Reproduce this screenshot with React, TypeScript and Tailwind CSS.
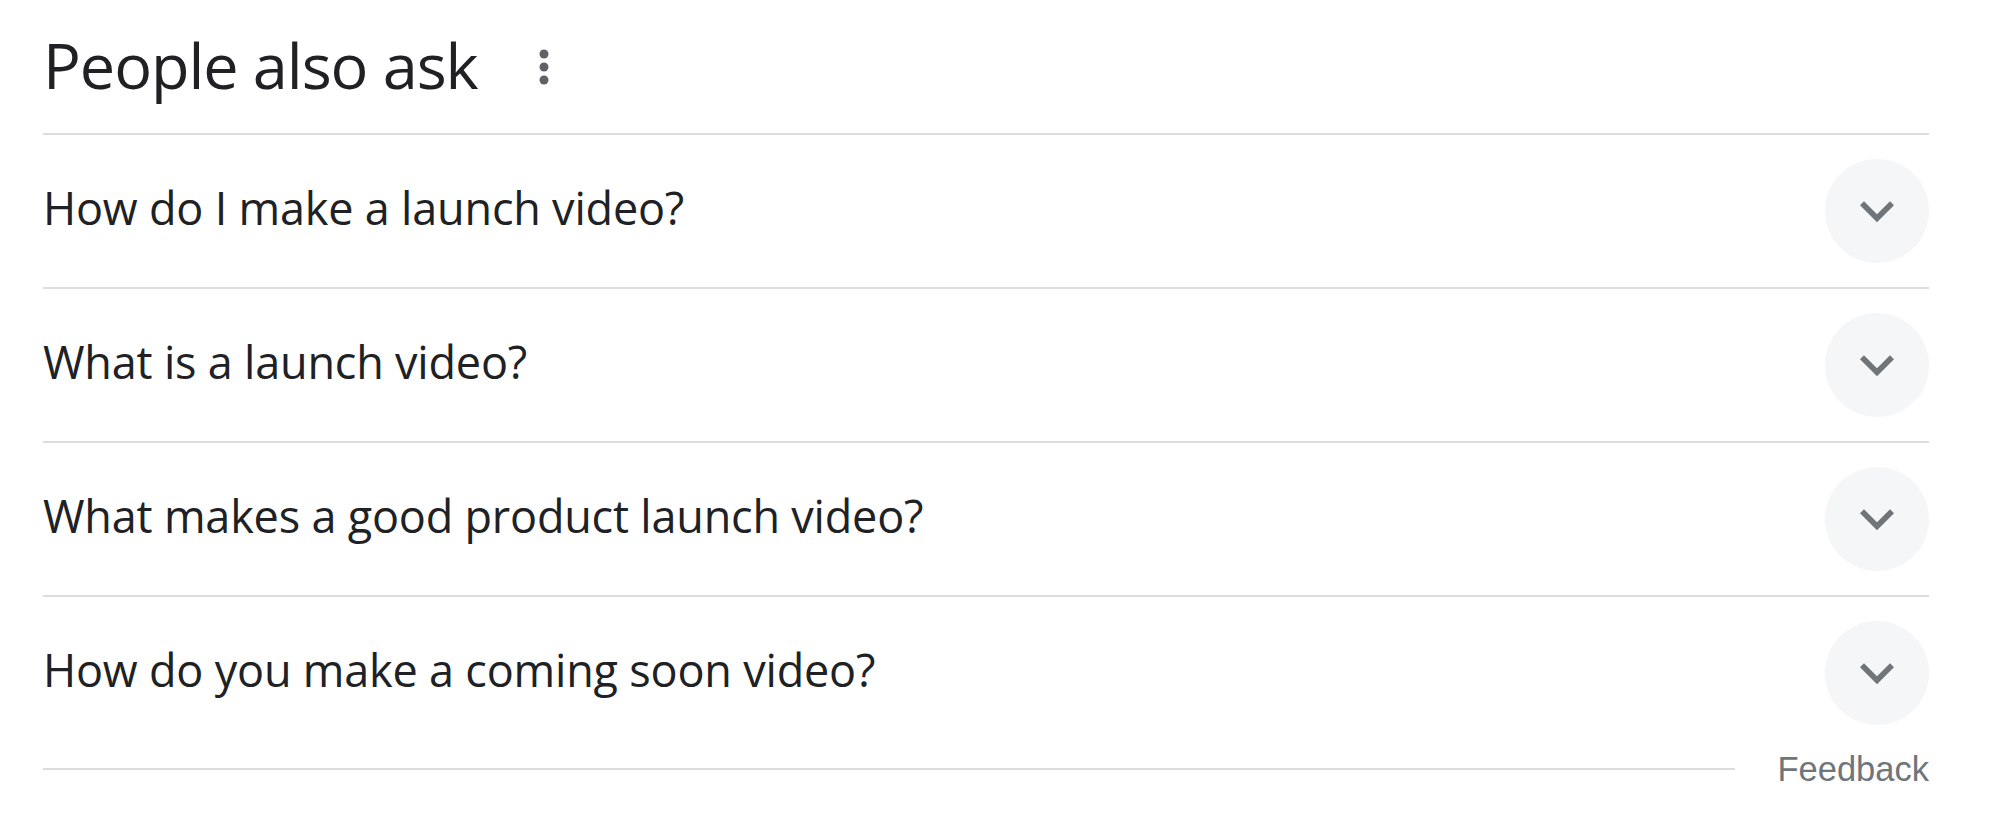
import React from "react";

const questions = [
  "How do I make a launch video?",
  "What is a launch video?",
  "What makes a good product launch video?",
  "How do you make a coming soon video?",
];

function Chevron() {
  return (
    <svg width="68" height="68" viewBox="0 0 24 24" fill="#70757a">
      <path d="M16.59 8.59L12 13.17 7.41 8.59 6 10l6 6 6-6z" />
    </svg>
  );
}

function Dots() {
  return (
    <svg width="10" height="36" viewBox="0 0 10 36" fill="#5f6368">
      <circle cx="5" cy="5" r="4.5" />
      <circle cx="5" cy="18" r="4.5" />
      <circle cx="5" cy="31" r="4.5" />
    </svg>
  );
}

export default function App() {
  return (
    <div className="w-[2000px] h-[825px] bg-white pl-[43px] pr-[71px] text-[#202124]" style={{ fontFamily: '"Open Sans", Arial, sans-serif' }}>
      <div className="h-[135px] flex items-center border-b-2 border-[#dadce0]">
        <span className="text-[63px] leading-none tracking-[-1.07px] w-[432px] whitespace-nowrap mb-[4px]">People also ask</span>
        <div className="ml-[64px] flex items-center">
          <Dots />
        </div>
      </div>
      {questions.map((q, i) => (
        <div
          key={q}
          className={
            i < questions.length - 1
              ? "h-[154px] flex items-center justify-between border-b-2 border-[#dadce0]"
              : "h-[152px] flex items-center justify-between"
          }
        >
          <span className="text-[45px] leading-none tracking-[-0.2px] whitespace-nowrap mb-[7px]">{q}</span>
          <div className="w-[104px] h-[104px] rounded-full bg-[#f5f6f7] flex items-center justify-center">
            <Chevron />
          </div>
        </div>
      ))}
      <div className="h-[40px] flex items-center">
        <div className="flex-1 h-[2px] bg-[#dadce0]"></div>
        <span className="ml-[42px] text-[34.5px] leading-none text-[#70757a]" style={{ fontFamily: '"Liberation Sans", Arial, sans-serif' }}>
          Feedback
        </span>
      </div>
    </div>
  );
}
